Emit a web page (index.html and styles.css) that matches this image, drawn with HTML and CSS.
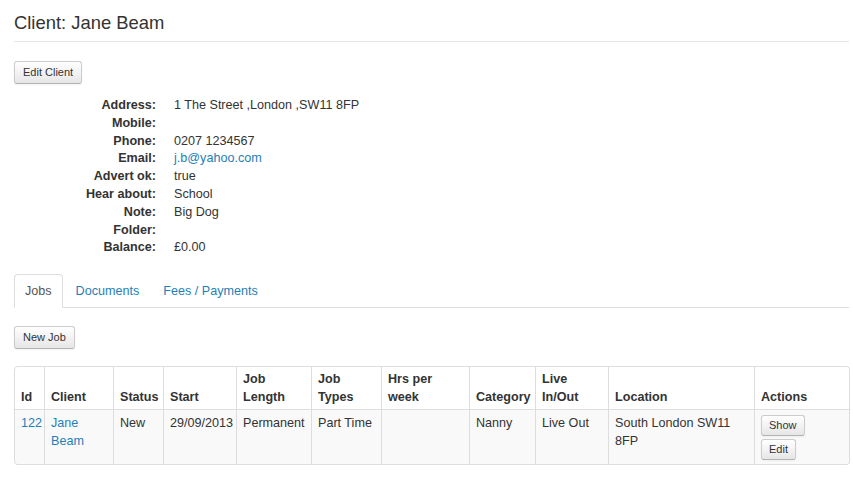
FILE: index.html
```html
<!DOCTYPE html>
<html>
<head>
<meta charset="utf-8">
<link rel="stylesheet" href="styles.css">
</head>
<body>
<div class="page">
  <h1 class="title">Client: Jane Beam</h1>
  <hr class="rule">
  <button class="btn">Edit Client</button>
  <dl class="details">
    <dt>Address:</dt><dd>1 The Street ,London ,SW11 8FP</dd>
    <dt>Mobile:</dt><dd></dd>
    <dt>Phone:</dt><dd>0207 1234567</dd>
    <dt>Email:</dt><dd><a href="#">j.b@yahoo.com</a></dd>
    <dt>Advert ok:</dt><dd>true</dd>
    <dt>Hear about:</dt><dd>School</dd>
    <dt>Note:</dt><dd>Big Dog</dd>
    <dt>Folder:</dt><dd></dd>
    <dt>Balance:</dt><dd>£0.00</dd>
  </dl>
  <ul class="tabs">
    <li class="tab active"><a href="#">Jobs</a></li>
    <li class="tab"><a href="#">Documents</a></li>
    <li class="tab"><a href="#">Fees / Payments</a></li>
  </ul>
  <button class="btn">New Job</button>
  <table class="jobs">
    <thead>
      <tr>
        <th class="c-id">Id</th>
        <th class="c-client">Client</th>
        <th class="c-status">Status</th>
        <th class="c-start">Start</th>
        <th class="c-len">Job Length</th>
        <th class="c-types">Job Types</th>
        <th class="c-hrs">Hrs per week</th>
        <th class="c-cat">Category</th>
        <th class="c-live">Live In/Out</th>
        <th class="c-loc">Location</th>
        <th class="c-act">Actions</th>
      </tr>
    </thead>
    <tbody>
      <tr>
        <td><a href="#">122</a></td>
        <td><a href="#">Jane Beam</a></td>
        <td>New</td>
        <td>29/09/2013</td>
        <td>Permanent</td>
        <td>Part Time</td>
        <td></td>
        <td>Nanny</td>
        <td>Live Out</td>
        <td>South London SW11 8FP</td>
        <td class="actions">
          <button class="btn btn-sm">Show</button>
          <button class="btn btn-sm">Edit</button>
        </td>
      </tr>
    </tbody>
  </table>
</div>
</body>
</html>
```

FILE: styles.css
```css
* { box-sizing: border-box; }
html, body { margin: 0; padding: 0; background: #fff; }
body {
  font-family: "Liberation Sans", Arial, sans-serif;
  font-size: 12.6px;
  line-height: 17.8px;
  color: #333;
}
a { color: #1f80b8; text-decoration: none; }
.page {
  width: 835px;
  margin-left: 14px;
  padding-top: 13px;
}
.title {
  margin: 0;
  font-size: 18.4px;
  line-height: 20px;
  font-weight: normal;
  color: #333;
}
.rule {
  margin: 8px 0 18px;
  border: 0;
  border-top: 1px solid #e6e6e6;
  border-bottom: 1px solid #fff;
  height: 0;
}
.btn {
  display: inline-block;
  font-family: "Liberation Sans", Arial, sans-serif;
  font-size: 11px;
  line-height: 15px;
  color: #333;
  padding: 3px 8px 3px;
  border: 1px solid #ccc;
  border-bottom-color: #b3b3b3;
  border-radius: 3px;
  background: linear-gradient(#fff, #e6e6e6);
  box-shadow: inset 0 1px 0 rgba(255,255,255,.2), 0 1px 2px rgba(0,0,0,.05);
  margin: 0;
  cursor: pointer;
  height: 23px;
}
.details {
  display: grid;
  grid-template-columns: 142px 1fr;
  column-gap: 18px;
  margin: 13px 0 0;
}
.details dt {
  font-weight: bold;
  text-align: right;
  min-height: 17.8px;
}
.details dd { margin: 0; min-height: 17.8px; }
.tabs {
  list-style: none;
  margin: 17px 0 18px;
  padding: 0;
  display: flex;
  border-bottom: 1px solid #ddd;
}
.tab {
  margin-right: 2px;
  margin-bottom: -1px;
}
.tab a {
  display: block;
  padding: 7px 10px 7px;
  line-height: 18px;
  border: 1px solid transparent;
  border-radius: 4px 4px 0 0;
}
.tab.active a {
  color: #555;
  border-color: #ddd #ddd transparent;
  background: #fff;
}
.jobs {
  margin-top: 17px;
  width: 835px;
  table-layout: fixed;
  border-collapse: separate;
  border-spacing: 0;
  border: 1px solid #ddd;
  border-left: 0;
  border-radius: 4px;
}
.jobs th, .jobs td {
  padding: 5px 6px 3px 6px;
  text-align: left;
  border-left: 1px solid #ddd;
  line-height: 17.8px;
}
.jobs th {
  font-weight: bold;
  vertical-align: bottom;
  background: #fff;
  padding-top: 4px;
  padding-bottom: 2px;
}
.jobs td {
  vertical-align: top;
  border-top: 1px solid #ddd;
  background: #f9f9f9;
}
.jobs thead th:first-child { border-top-left-radius: 4px; }
.jobs thead th:last-child { border-top-right-radius: 4px; }
.jobs tbody td:first-child { border-bottom-left-radius: 4px; }
.jobs tbody td:last-child { border-bottom-right-radius: 4px; }
.c-id { width: 30px; }
.c-client { width: 69px; }
.c-status { width: 50px; }
.c-start { width: 73px; }
.c-len { width: 75px; }
.c-types { width: 70px; }
.c-hrs { width: 88px; }
.c-cat { width: 66px; }
.c-live { width: 73px; }
.c-loc { width: 146px; }
.c-act { width: 95px; }
.jobs td.actions { padding-top: 5px; padding-bottom: 4px; }
.btn-sm {
  display: block;
  height: 21px;
  padding: 2px 7px;
  font-size: 11px;
  line-height: 15px;
  margin-bottom: 3px;
}
.btn-sm:last-child { margin-bottom: 0; }
```
